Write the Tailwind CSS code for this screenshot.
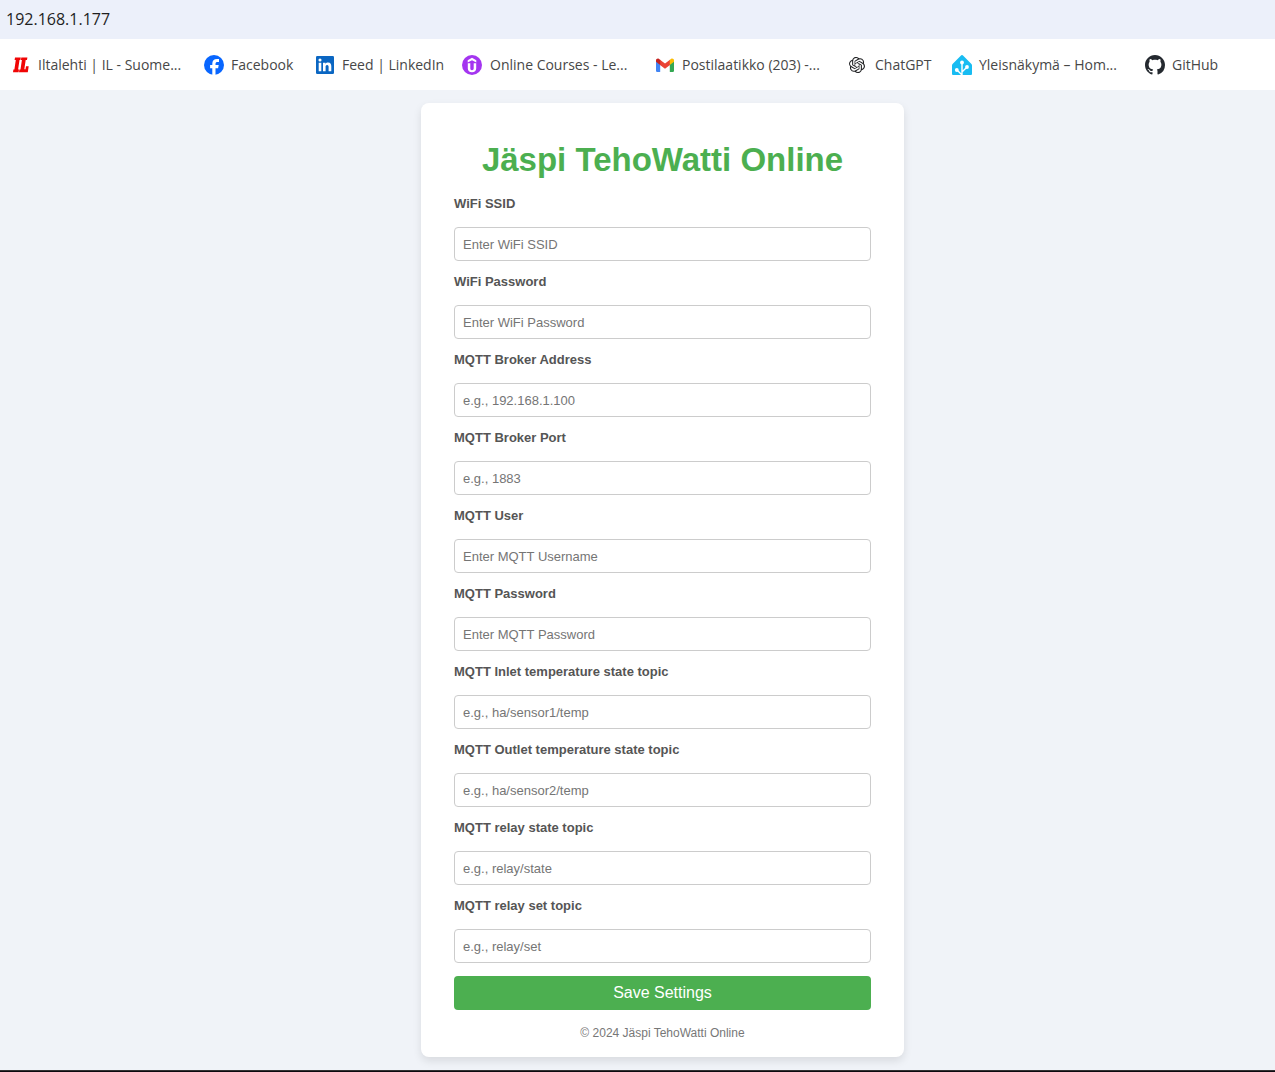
<!DOCTYPE html>
<html lang="en">
<head>
<meta charset="utf-8">
<meta name="viewport" content="width=device-width, initial-scale=1">
<title>Jäspi TehoWatti Online</title>
<script src="https://cdn.jsdelivr.net/npm/@tailwindcss/browser@4"></script>
</head>
<body class="flex min-h-screen flex-col bg-[#f0f3f8] font-['Liberation_Sans',Arial,sans-serif]">
<header class="font-['Open_Sans','Noto_Sans',sans-serif]">
  <div class="flex h-[39px] items-center bg-[#ecf0fa] px-[6px] pb-[2px] text-base text-[#1f1f1f]">192.168.1.177</div>
  <nav aria-label="Bookmarks" class="flex h-[51px] items-center bg-white pl-[11px] text-sm whitespace-nowrap text-[#474747]">
    <a href="#" class="flex w-[193px] shrink-0 items-center gap-[7px]">
      <svg class="size-5 shrink-0" viewBox="0 0 20 20" fill="#f00505"><path d="M4 2.500H9.800l-.4 2.600H8.500L7.100 14.500H8L7.600 17.300H2l.4-2.800h1L4.800 5.100H3.600zM10.300 2.500h6.100l-.4 2.600h-1.300L13.300 14.200h1.200l.5-3H17.700l-.9 6.100H8l.4-2.800h1.100L10.900 5.100H9.900z"/></svg>
      Iltalehti | IL - Suome...</a>
    <a href="#" class="flex w-[111px] shrink-0 items-center gap-[7px]">
      <svg class="size-5 shrink-0" viewBox="0 0 20 20"><circle cx="10" cy="10" r="10" fill="#0866ff"/><path fill="#fff" d="M8.300 19.900v-6.700H6.100V10h2.200V8.700c0-3.300 1.500-4.800 4.700-4.800.6 0 1.600.1 2 .2v2.800h-1.300c-1.600 0-2.200.6-2.200 2.100v1h3.200l-.6 3.200h-2.600v6.700a10 10 0 0 1-3.200 0z"/></svg>
      Facebook</a>
    <a href="#" class="flex w-[147px] shrink-0 items-center gap-[7px]">
      <svg class="size-5 shrink-0" viewBox="0 0 20 20"><rect x="1" y="1" width="18" height="18" rx="1.300" fill="#0a66c2"/><path fill="#fff" d="M3.700 7.800h2.600v8.500H3.700zM5 3.500A1.550 1.550 0 1 1 5 6.600 1.550 1.550 0 0 1 5 3.500zM8 7.800h2.500v1.200c.5-.9 1.400-1.400 2.600-1.400 2.600 0 3.200 1.700 3.200 4v4.700h-2.700v-4.200c0-1.200-.2-2.200-1.500-2.200s-1.500 1-1.500 2.100v4.300H8z"/></svg>
      Feed | LinkedIn</a>
    <a href="#" class="flex w-[193px] shrink-0 items-center gap-[8px]">
      <svg class="size-5 shrink-0" viewBox="0 0 20 20"><circle cx="10" cy="10" r="10" fill="#a435f0"/><path fill="#fff" d="M10 2.800l4.300 2.500v2.300L10 5.200 5.700 7.600V5.300zM5.800 8.300h2.500v5c0 1.300.6 1.900 1.700 1.900s1.700-.6 1.700-1.900v-5h2.500v5.100c0 2.300-1.600 3.800-4.200 3.800s-4.200-1.500-4.200-3.800z"/></svg>
      Online Courses - Le...</a>
    <a href="#" class="flex w-[192px] shrink-0 items-center gap-[7px]">
      <svg class="size-5 shrink-0" viewBox="0 0 20 20"><path fill="#4285f4" d="M1 6l4.200 3v8H2.200A1.200 1.200 0 0 1 1 15.800z"/><path fill="#34a853" d="M14.800 9L19 6v9.800a1.200 1.200 0 0 1-1.200 1.200h-3z"/><path fill="#ea4335" d="M5 4.700l5 3.700 5-3.700v5.200l-5 3.800-5-3.800z"/><path fill="#fbbc04" d="M14.800 4.800l1.200-.9c1.200-.9 3-.1 3 1.500v1.400L14.800 10z"/><path fill="#c5221f" d="M5.200 4.800L4 3.900c-1.200-.9-3-.1-3 1.500v1.400L5.200 10z"/></svg>
      Postilaatikko (203) -...</a>
    <a href="#" class="flex w-[105px] shrink-0 items-center gap-[8px]">
      <svg class="size-5 shrink-0 p-[2px]" viewBox="0 0 24 24" fill="#202123"><path d="M22.282 9.821a5.985 5.985 0 0 0-.516-4.911 6.046 6.046 0 0 0-6.510-2.900A6.065 6.065 0 0 0 4.981 4.182a5.985 5.985 0 0 0-3.998 2.900 6.046 6.046 0 0 0 .743 7.097 5.980 5.980 0 0 0 .511 4.911 6.051 6.051 0 0 0 6.515 2.900A5.985 5.985 0 0 0 13.260 24a6.056 6.056 0 0 0 5.772-4.206 5.990 5.990 0 0 0 3.998-2.900 6.056 6.056 0 0 0-.748-7.073zM13.260 22.430a4.476 4.476 0 0 1-2.876-1.040l.141-.081 4.779-2.758a.795.795 0 0 0 .393-.681v-6.737l2.020 1.169a.071.071 0 0 1 .038.052v5.583a4.504 4.504 0 0 1-4.495 4.493zM3.600 18.304a4.471 4.471 0 0 1-.535-3.014l.142.085 4.783 2.759a.771.771 0 0 0 .781 0l5.843-3.369v2.332a.080.080 0 0 1-.033.062L9.740 19.950a4.500 4.500 0 0 1-6.140-1.646zM2.341 7.896a4.485 4.485 0 0 1 2.366-1.973V11.600a.766.766 0 0 0 .388.677l5.815 3.354-2.020 1.169a.076.076 0 0 1-.071 0l-4.830-2.787A4.504 4.504 0 0 1 2.341 7.872zm16.597 3.855l-5.834-3.387L15.119 7.200a.076.076 0 0 1 .071 0l4.830 2.791a4.494 4.494 0 0 1-.677 8.105v-5.678a.790.790 0 0 0-.405-.667zm2.011-3.023l-.142-.085-4.774-2.782a.776.776 0 0 0-.785 0L9.409 9.230V6.897a.066.066 0 0 1 .028-.061l4.830-2.787a4.499 4.499 0 0 1 6.682 4.660zM8.307 12.863l-2.020-1.164a.080.080 0 0 1-.038-.057V6.075a4.499 4.499 0 0 1 7.376-3.454l-.142.081L8.704 5.460a.795.795 0 0 0-.393.681zm1.097-2.365L12.006 9l2.607 1.500v2.999l-2.597 1.500-2.607-1.500z"/></svg>
      ChatGPT</a>
    <a href="#" class="flex w-[193px] shrink-0 items-center gap-[7px]">
      <svg class="size-5 shrink-0" viewBox="0 0 20 20"><path fill="#18bcf2" d="M9 .500a1.400 1.400 0 0 1 2 0l8.200 8.200c.5.500.8 1.200.8 1.900V19a1 1 0 0 1-1 1H1a1 1 0 0 1-1-1v-8.400c0-.7.300-1.400.8-1.900z"/><path fill="none" stroke="#fff" stroke-width="1.400" d="M10 20V7.500M10 20l-5-5M10 17l5-5"/><g fill="#fff"><circle cx="10" cy="7.500" r="1.900"/><circle cx="4.800" cy="15" r="1.900"/><circle cx="15" cy="12" r="1.900"/></g></svg>
      Yleisnäkymä – Hom...</a>
    <a href="#" class="flex shrink-0 items-center gap-[7px]">
      <svg class="size-5 shrink-0" viewBox="0 0 16 16" fill="#24292f"><path d="M8 0C3.580 0 0 3.580 0 8c0 3.540 2.290 6.530 5.470 7.590.4.070.55-.170.55-.380 0-.190-.010-.820-.010-1.490-2.010.370-2.530-.490-2.690-.940-.090-.230-.480-.940-.820-1.130-.280-.150-.680-.520-.010-.530.630-.010 1.080.580 1.230.820.720 1.210 1.870.870 2.330.660.070-.520.280-.870.510-1.070-1.780-.200-3.640-.890-3.640-3.950 0-.870.310-1.590.820-2.150-.080-.200-.360-1.020.080-2.120 0 0 .670-.210 2.200.820.640-.180 1.320-.270 2-.270s1.360.090 2 .270c1.530-1.040 2.200-.820 2.200-.820.440 1.100.160 1.920.080 2.120.510.560.820 1.270.820 2.150 0 3.070-1.870 3.750-3.650 3.950.290.250.540.730.540 1.480 0 1.070-.010 1.930-.010 2.200 0 .210.150.460.550.380A8.010 8.010 0 0 0 16 8c0-4.420-3.580-8-8-8z"/></svg>
      GitHub</a>
  </nav>
</header>

<main class="flex grow justify-center pt-[13px] pb-[13px] pl-[50px]">
  <form class="w-full max-w-[483px] rounded-lg bg-white px-[33px] pt-[33px] pb-[15px] text-[13px] shadow-[0_4px_8px_rgba(0,0,0,0.1)]">
    <h1 class="mb-3 text-center text-[33px] leading-12 font-bold text-[#4caf50]">Jäspi TehoWatti Online</h1>
    <div class="flex flex-col gap-[13px]">
      <div class="flex flex-col gap-[15px]"><label for="ssid" class="leading-4 font-bold text-[#555]">WiFi SSID</label><input id="ssid" type="text" placeholder="Enter WiFi SSID" class="h-[34px] w-full rounded border border-[#ccc] bg-white px-2 placeholder:text-[#757575]"></div>
      <div class="flex flex-col gap-[15px]"><label for="wpass" class="leading-4 font-bold text-[#555]">WiFi Password</label><input id="wpass" type="password" placeholder="Enter WiFi Password" class="h-[34px] w-full rounded border border-[#ccc] bg-white px-2 placeholder:text-[#757575]"></div>
      <div class="flex flex-col gap-[15px]"><label for="broker" class="leading-4 font-bold text-[#555]">MQTT Broker Address</label><input id="broker" type="text" placeholder="e.g., 192.168.1.100" class="h-[34px] w-full rounded border border-[#ccc] bg-white px-2 placeholder:text-[#757575]"></div>
      <div class="flex flex-col gap-[15px]"><label for="port" class="leading-4 font-bold text-[#555]">MQTT Broker Port</label><input id="port" type="text" placeholder="e.g., 1883" class="h-[34px] w-full rounded border border-[#ccc] bg-white px-2 placeholder:text-[#757575]"></div>
      <div class="flex flex-col gap-[15px]"><label for="user" class="leading-4 font-bold text-[#555]">MQTT User</label><input id="user" type="text" placeholder="Enter MQTT Username" class="h-[34px] w-full rounded border border-[#ccc] bg-white px-2 placeholder:text-[#757575]"></div>
      <div class="flex flex-col gap-[15px]"><label for="mpass" class="leading-4 font-bold text-[#555]">MQTT Password</label><input id="mpass" type="password" placeholder="Enter MQTT Password" class="h-[34px] w-full rounded border border-[#ccc] bg-white px-2 placeholder:text-[#757575]"></div>
      <div class="flex flex-col gap-[15px]"><label for="inlet" class="leading-4 font-bold text-[#555]">MQTT Inlet temperature state topic</label><input id="inlet" type="text" placeholder="e.g., ha/sensor1/temp" class="h-[34px] w-full rounded border border-[#ccc] bg-white px-2 placeholder:text-[#757575]"></div>
      <div class="flex flex-col gap-[15px]"><label for="outlet" class="leading-4 font-bold text-[#555]">MQTT Outlet temperature state topic</label><input id="outlet" type="text" placeholder="e.g., ha/sensor2/temp" class="h-[34px] w-full rounded border border-[#ccc] bg-white px-2 placeholder:text-[#757575]"></div>
      <div class="flex flex-col gap-[15px]"><label for="rstate" class="leading-4 font-bold text-[#555]">MQTT relay state topic</label><input id="rstate" type="text" placeholder="e.g., relay/state" class="h-[34px] w-full rounded border border-[#ccc] bg-white px-2 placeholder:text-[#757575]"></div>
      <div class="flex flex-col gap-[15px]"><label for="rset" class="leading-4 font-bold text-[#555]">MQTT relay set topic</label><input id="rset" type="text" placeholder="e.g., relay/set" class="h-[34px] w-full rounded border border-[#ccc] bg-white px-2 placeholder:text-[#757575]"></div>
      <button type="submit" class="h-[34px] w-full rounded bg-[#4caf50] text-base leading-4 text-white">Save Settings</button>
    </div>
    <p class="mt-[15px] text-center text-xs leading-4 text-[#777]">© 2024 Jäspi TehoWatti Online</p>
  </form>
</main>
<footer class="h-[2px] border-t border-[#333] bg-[#0c0a0f]"></footer>
</body>
</html>
